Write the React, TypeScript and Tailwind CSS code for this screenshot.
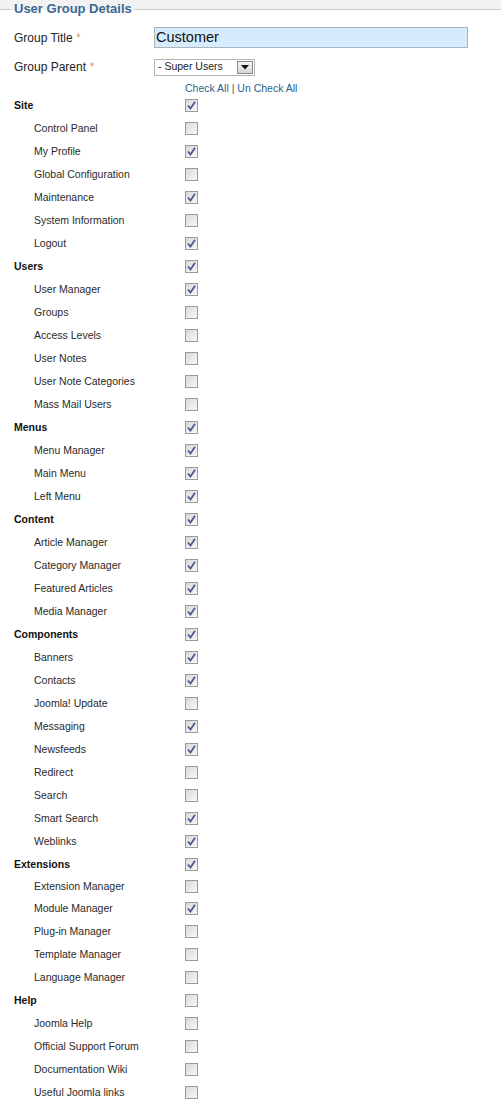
import { useState } from "react";

type Row = { label: string; group?: boolean; checked: boolean; tight?: boolean };

const rows: Row[] = [
  { label: "Site", group: true, checked: true },
  { label: "Control Panel", checked: false },
  { label: "My Profile", checked: true },
  { label: "Global Configuration", checked: false },
  { label: "Maintenance", checked: true },
  { label: "System Information", checked: false },
  { label: "Logout", checked: true },
  { label: "Users", group: true, checked: true },
  { label: "User Manager", checked: true },
  { label: "Groups", checked: false },
  { label: "Access Levels", checked: false },
  { label: "User Notes", checked: false },
  { label: "User Note Categories", checked: false },
  { label: "Mass Mail Users", checked: false },
  { label: "Menus", group: true, checked: true },
  { label: "Menu Manager", checked: true },
  { label: "Main Menu", checked: true },
  { label: "Left Menu", checked: true },
  { label: "Content", group: true, checked: true },
  { label: "Article Manager", checked: true },
  { label: "Category Manager", checked: true },
  { label: "Featured Articles", checked: true },
  { label: "Media Manager", checked: true },
  { label: "Components", group: true, checked: true },
  { label: "Banners", checked: true },
  { label: "Contacts", checked: true },
  { label: "Joomla! Update", checked: false },
  { label: "Messaging", checked: true },
  { label: "Newsfeeds", checked: true },
  { label: "Redirect", checked: false },
  { label: "Search", checked: false },
  { label: "Smart Search", checked: true },
  { label: "Weblinks", checked: true },
  { label: "Extensions", group: true, checked: true },
  { label: "Extension Manager", checked: false, tight: true },
  { label: "Module Manager", checked: true },
  { label: "Plug-in Manager", checked: false },
  { label: "Template Manager", checked: false },
  { label: "Language Manager", checked: false },
  { label: "Help", group: true, checked: false },
  { label: "Joomla Help", checked: false },
  { label: "Official Support Forum", checked: false },
  { label: "Documentation Wiki", checked: false },
  { label: "Useful Joomla links", checked: false },
];

export default function App() {
  const [checks, setChecks] = useState<boolean[]>(rows.map((r) => r.checked));

  const toggle = (i: number) => setChecks((c) => c.map((v, j) => (j === i ? !v : v)));

  return (
    <div className="w-[501px] min-h-[1118px] bg-white font-['Liberation_Sans',Arial,sans-serif] text-[#333]">
      {/* legend bar */}
      <div className="relative h-[18px]">
        <div className="h-[10px] bg-[#f2f2f2] border-b border-[#cccccc]" />
        <div className="absolute left-[12px] top-[1px] px-[2px] bg-[linear-gradient(to_bottom,#f2f2f2_9px,#ffffff_9px)] text-[13px] font-bold leading-[16px] text-[#3b6894]">
          User Group Details
        </div>
      </div>

      <div className="mt-[9px] flex items-center pl-[14px]">
        <div className="w-[140px] text-[12px] text-[#222]">
          Group Title <span className="text-[#d49a78]">*</span>
        </div>
        <div className="flex h-[21px] w-[314px] items-center border border-[#a9b4bf] bg-[#d6ebfc] px-[1px] text-[14.5px] text-[#111]">
          Customer
        </div>
      </div>

      <div className="mt-[10px] flex items-center pl-[14px]">
        <div className="w-[140px] text-[12px] text-[#222]">
          Group Parent <span className="text-[#d49a78]">*</span>
        </div>
        <div className="flex h-[17px] w-[101px] items-center justify-between border border-[#b5b5b5] bg-white pl-[3px] pr-[1px] text-[10.5px] text-[#222]">
          <span>- Super Users</span>
          <span className="flex h-[13px] w-[16px] items-center justify-center border border-[#8a8a8a] bg-[linear-gradient(to_bottom,#f4f4f4,#d6d6d6)]">
            <svg width="8" height="5" viewBox="0 0 8 5">
              <path d="M0 0H8L4 4.5Z" fill="#111" />
            </svg>
          </span>
        </div>
      </div>

      <div className="mt-[6px] pl-[185px] text-[10.5px] leading-[12px] text-[#2d5f86]">
        <span className="cursor-pointer" onClick={() => setChecks(rows.map(() => true))}>Check All</span>
        <span className="text-[#555]"> | </span>
        <span className="cursor-pointer" onClick={() => setChecks(rows.map(() => false))}>Un Check All</span>
      </div>

      <div>
        {rows.map((r, i) => (
          <div key={r.label} className={`flex items-center pl-[14px] ${r.tight ? "h-[21px]" : "h-[23px]"}`}>
            <div
              className={`w-[171px] text-[10.5px] ${r.group ? "font-bold text-[#111]" : "pl-[20px] text-[#2a2a2a]"}`}
            >
              {r.label}
            </div>
            <Box checked={checks[i]} onClick={() => toggle(i)} />
          </div>
        ))}
      </div>
    </div>
  );
}

function Box({ checked, onClick }: { checked: boolean; onClick: () => void }) {
  return (
    <span
      onClick={onClick}
      className="flex h-[13px] w-[13px] cursor-pointer items-center justify-center border border-[#9a9a9a] bg-[linear-gradient(135deg,#d9d9d9,#f8f8f8)]"
    >
      {checked ? (
        <svg width="9" height="9" viewBox="0 0 9 9">
          <path d="M1 4.5L3.5 7.5L8 0.8" fill="none" stroke="#4b5c8c" strokeWidth="1.8" />
        </svg>
      ) : null}
    </span>
  );
}
